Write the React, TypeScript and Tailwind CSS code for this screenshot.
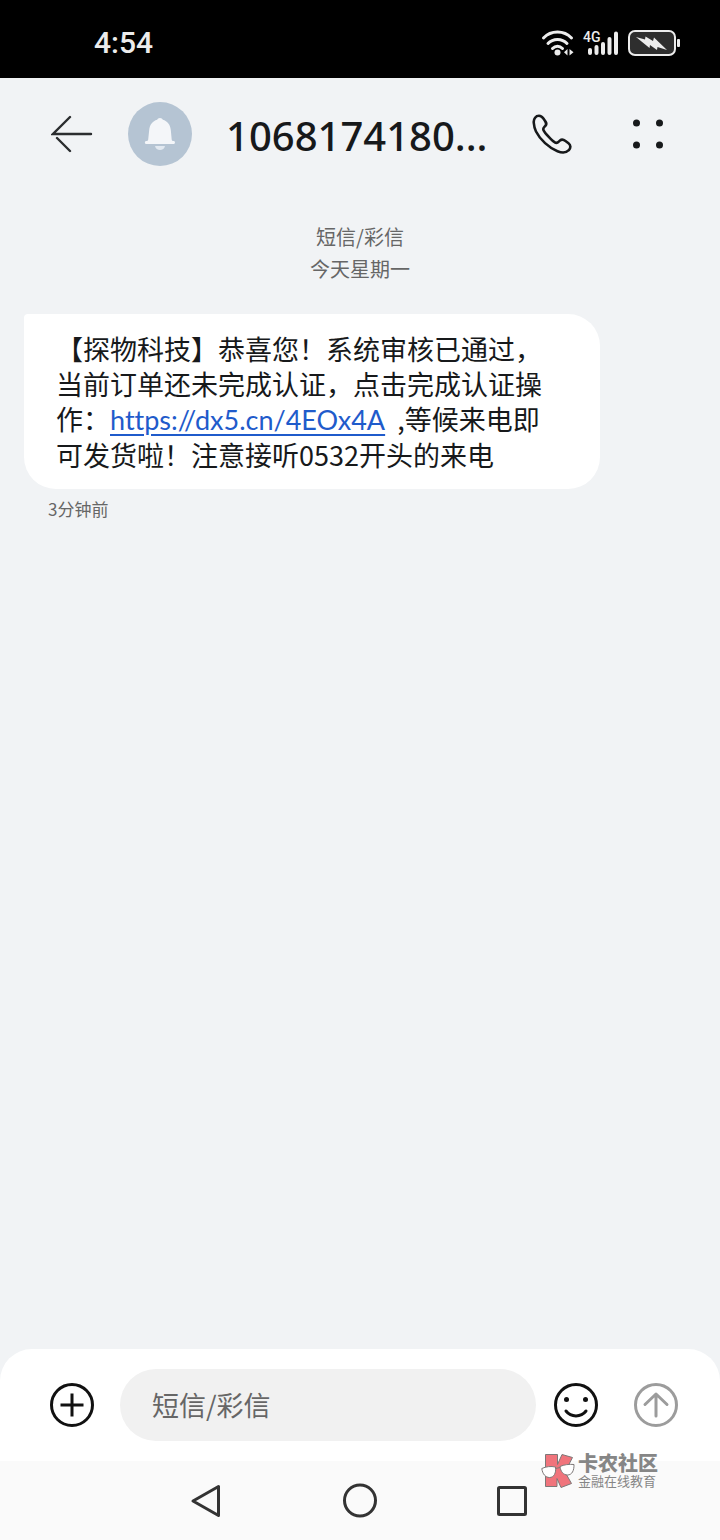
import { useState } from 'react';

const WifiIcon = () => (
  <svg width="34" height="28" viewBox="0 0 34 28" fill="none" stroke="#ececec" strokeWidth="3" strokeLinecap="round">
    <path d="M3.500 9C11 1 24 1 31.500 9" />
    <path d="M8 14.500C13 9 22 9 27 14.500" />
    <path d="M12.500 19.500C15.500 16.500 19.500 16.500 22.500 19.500" />
    <circle cx="17.500" cy="23.500" r="3" fill="#ececec" stroke="none" />
    <path d="M27.500 20v6.500L24 23.200zM29.500 20v6.500L33.500 23.200z" fill="#ececec" stroke="none" />
  </svg>
);

const SignalIcon = () => (
  <svg width="36" height="28" viewBox="0 0 36 28" fill="none" stroke="#ececec" strokeWidth="4" strokeLinecap="round">
    <path d="M8 21v3M14.500 18v6M21 15v9M27.500 10v14M34 4.500V24" />
    <text x="1" y="13" fill="#ececec" stroke="none" fontFamily="Roboto, sans-serif" fontSize="14" fontWeight="500">4G</text>
  </svg>
);

const BatteryIcon = () => (
  <svg width="53" height="28" viewBox="0 0 53 28">
    <rect x="1" y="2" width="46" height="24" rx="6" fill="#2e2e2e" stroke="#ececec" strokeWidth="2" />
    <path d="M8 8l9 2.500.5-3L25 12l1-3.500L39 21l-9.500-3-.5 3-7-5-.5 3z" fill="#ececec" />
    <rect x="49" y="10" width="3" height="8" rx="1" fill="#ececec" />
  </svg>
);

const BackIcon = () => (
  <svg width="42" height="40" viewBox="0 0 42 40" fill="none" stroke="#2b2d2f" strokeWidth="2.400" strokeLinecap="round">
    <path d="M19 3L2 20h38M6 24l13 13" />
  </svg>
);

const BellIcon = () => (
  <svg width="32" height="34" viewBox="0 0 32 34" fill="#f4f6f9">
    <path d="M16 1c1.500 0 2.300.8 2.800 1.800C23.500 4 26.300 8 26.800 13l.9 9.500c.1 1.200.8 1.500 2.200 1.500 1.400 0 1.500 3 0 3H2c-1.500 0-1.400-3 0-3 1.400 0 2.100-.3 2.200-1.500L5.200 13C5.700 8 8.500 4 13.200 2.800 13.700 1.800 14.500 1 16 1z" />
    <path d="M11 29h10c-.5 2.400-2.500 4-5 4s-4.500-1.600-5-4z" fill="#e2e9f1" />
  </svg>
);

const PhoneIcon = () => (
  <svg width="40" height="40" viewBox="0 0 40 40" fill="none" stroke="#17191b" strokeWidth="2.600" strokeLinejoin="round">
    <path d="M1.800 9C1.300 4.500 4 1.800 7 1.800c2.500 0 3.600 1.500 5 3.500 2 2.700 3 4 1.800 6-1.200 1.800-3.500 2.500-2.200 5 1.500 3 8.500 10.500 11.400 12.200 2.500 1.300 3.500-.8 5-2 1.800-1.500 3.500-1 5.500.5l3 2.200c2.300 1.700 2.500 5 .3 7-2.500 2.500-6.500 3-11.300 1C17 34 8 25.500 4 17.500 2.500 14.500 2 11.500 1.800 9z" />
  </svg>
);

const MoreIcon = () => (
  <svg width="32" height="32" viewBox="0 0 32 32" fill="#17191b">
    <circle cx="4.500" cy="5" r="3.500" />
    <circle cx="27.500" cy="5" r="3.500" />
    <circle cx="4.500" cy="27" r="3.500" />
    <circle cx="27.500" cy="27" r="3.500" />
  </svg>
);

const PlusIcon = () => (
  <svg width="44" height="44" viewBox="0 0 44 44" fill="none" stroke="#111" strokeWidth="3">
    <circle cx="22" cy="22" r="20.500" />
    <path d="M10.500 22h23M22 10.500v23" />
  </svg>
);

const SmileIcon = () => (
  <svg width="44" height="44" viewBox="0 0 44 44" fill="none" stroke="#111" strokeWidth="3" strokeLinecap="round">
    <circle cx="22" cy="22" r="20.500" />
    <circle cx="12.500" cy="16.500" r="2.500" fill="#111" stroke="none" />
    <circle cx="31.500" cy="16.500" r="2.500" fill="#111" stroke="none" />
    <path d="M12 28c5 6.500 15 6.500 20 0" />
  </svg>
);

const SendIcon = () => (
  <svg width="44" height="44" viewBox="0 0 44 44" fill="none" stroke="#9c9c9c" strokeWidth="3" strokeLinecap="round">
    <circle cx="22" cy="22" r="20.500" />
    <path d="M22 33V11M11 21.500L22 11l11 10.500" strokeLinejoin="round" />
  </svg>
);

const GlassesLogo = () => (
  <svg width="34" height="36" viewBox="0 0 34 36" stroke="#7d7878" strokeWidth="1" strokeLinejoin="round">
    <path d="M4.500 1.500h12v10L21 1.500l10.500 3L24 19l6.500 11.500L20 34.500l-4-9v8H4.500z" fill="#f0747c" />
    <path d="M.8 15.500C5 13.500 10 13 14.500 14c.8 6-1.500 10.500-6 10.500C4.500 24.500 1.500 21 .8 15.500z" fill="#fff" />
    <path d="M19 13.500c4-1.800 9-2.500 14-2 .2 6-2 10.500-6.500 10.500-4 0-7-3.500-7.500-8.500z" fill="#fff" />
    <path d="M14.500 15.500l4.500-1" fill="none" />
  </svg>
);

function StatusBar() {
  return (
    <div className="flex h-[78px] items-center justify-between bg-black pt-2 pr-[39px] pl-[94px]">
      <span className="font-[Roboto,sans-serif] text-[30px] leading-9 font-medium text-[#ececec]">4:54</span>
      <div className="flex items-center gap-2">
        <WifiIcon />
        <div className="flex items-center gap-[10px]">
          <SignalIcon />
          <BatteryIcon />
        </div>
      </div>
    </div>
  );
}

function ChatHeader() {
  return (
    <header className="flex h-28 items-center pr-14 pl-[51px]">
      <button aria-label="返回" className="shrink-0">
        <BackIcon />
      </button>
      <div className="ml-[35px] flex size-16 shrink-0 items-center justify-center rounded-full bg-[#b5c4d3]">
        <BellIcon />
      </div>
      <h1 className="ml-[34px] flex-1 pt-[3px] font-['Noto_Sans',sans-serif] text-[40px] leading-[56px] font-medium whitespace-nowrap text-[#17191b]">
        1068174180...
      </h1>
      <button aria-label="拨打电话" className="shrink-0">
        <PhoneIcon />
      </button>
      <button aria-label="更多" className="ml-[60px] shrink-0">
        <MoreIcon />
      </button>
    </header>
  );
}

function Message() {
  return (
    <div className="px-6">
      <p className="max-w-[576px] rounded-4xl rounded-tl-sm bg-white py-[17px] pr-10 pl-8 text-[27px] leading-[35px] text-[#17191b]">
        【探物科技】恭喜您！系统审核已通过，当前订单还未完成认证，点击完成认证操作：
        <a
          href="https://dx5.cn/4EOx4A"
          className="font-[Lato,sans-serif] text-[#1f5bcb] underline decoration-2 underline-offset-4 [font-variant-ligatures:none]"
        >
          https://dx5.cn/4EOx4A
        </a>
        &nbsp;&nbsp;,等候来电即可发货啦！注意接听0532开头的来电
      </p>
      <p className="mt-2 ml-6 text-[17px] leading-6 text-[#666]">3分钟前</p>
    </div>
  );
}

function Composer() {
  const [text, setText] = useState('');

  return (
    <form
      onSubmit={(e) => e.preventDefault()}
      className="flex h-28 items-center rounded-t-4xl bg-white pr-[42px] pl-[50px]"
    >
      <button type="button" aria-label="添加" className="shrink-0">
        <PlusIcon />
      </button>
      <input
        type="text"
        aria-label="短信/彩信"
        placeholder="短信/彩信"
        value={text}
        onChange={(e) => setText(e.target.value)}
        className="ml-[26px] h-[72px] min-w-0 flex-1 rounded-full bg-[#f1f1f1] px-8 pb-[2px] text-[27px] text-[#17191b] outline-none placeholder:text-[#666]"
      />
      <button type="button" aria-label="表情" className="ml-[18px] shrink-0">
        <SmileIcon />
      </button>
      <button type="submit" aria-label="发送" className="ml-9 shrink-0">
        <SendIcon />
      </button>
    </form>
  );
}

function NavBar() {
  return (
    <nav className="flex h-[79px] items-center justify-center gap-[116px] bg-[#fafafa]">
      <button aria-label="后退">
        <svg width="36" height="36" viewBox="0 0 36 36" fill="none" stroke="#333" strokeWidth="3" strokeLinejoin="round">
          <path d="M3 18L28.500 3.500v29z" />
        </svg>
      </button>
      <button aria-label="主屏幕">
        <svg width="36" height="36" viewBox="0 0 36 36" fill="none" stroke="#333" strokeWidth="3">
          <circle cx="18" cy="17.500" r="15.500" />
        </svg>
      </button>
      <button aria-label="最近任务">
        <svg width="36" height="36" viewBox="0 0 36 36" fill="none" stroke="#333" strokeWidth="3">
          <rect x="4.500" y="4.500" width="27" height="27" rx="1" />
        </svg>
      </button>
    </nav>
  );
}

export default function App() {
  return (
    <div className="relative flex min-h-screen flex-col bg-[#f1f3f5] font-['Noto_Sans_CJK_SC',sans-serif]">
      <StatusBar />
      <ChatHeader />

      <main className="flex-1">
        <div className="pt-[31px] pb-[29px] text-center text-[20px] leading-8 text-[#666]">
          <p>短信/彩信</p>
          <p>今天星期一</p>
        </div>
        <Message />
      </main>

      <Composer />
      <NavBar />

      {/* Community watermark over the bottom bars */}
      <div className="pointer-events-none absolute right-[62px] bottom-[51px] flex items-center gap-[3px] text-[#868686]">
        <GlassesLogo />
        <div>
          <p className="text-[20px] leading-5 font-black">卡农社区</p>
          <p className="text-[13px] leading-4">金融在线教育</p>
        </div>
      </div>
    </div>
  );
}
